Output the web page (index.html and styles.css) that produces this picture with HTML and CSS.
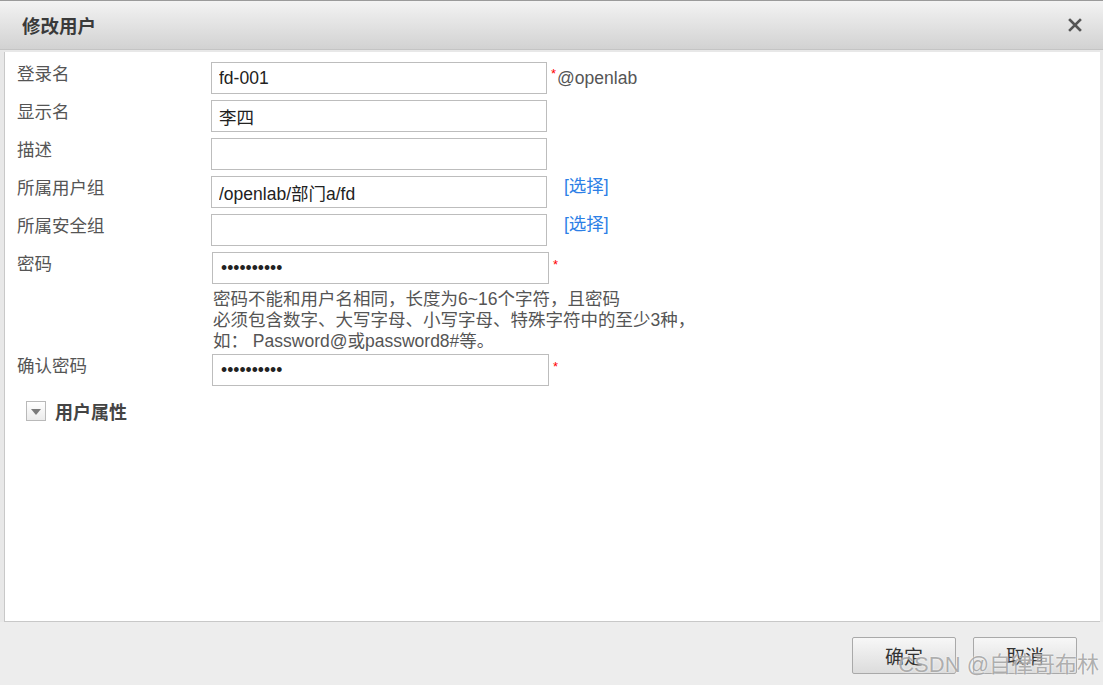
FILE: index.html
```html
<!DOCTYPE html>
<html>
<head>
    <meta charset="utf-8">
    <title>修改用户</title>
    <link rel="stylesheet" href="styles.css">
</head>
<body>
    <div class="dialog">
        <div class="dlg-head">
            <span class="dlg-title">修改用户</span>
            <svg class="dlg-close" width="14" height="14" viewBox="0 0 14 14">
                <path d="M2 2 L12 12 M12 2 L2 12" stroke="#555" stroke-width="2.6" stroke-linecap="square"/>
            </svg>
        </div>

        <div class="dlg-body">
            <div class="form-row">
                <label class="form-label">登录名</label>
                <input class="form-input" type="text" value="fd-001">
                <span class="req">*</span><span class="suffix">@openlab</span>
            </div>
            <div class="form-row">
                <label class="form-label">显示名</label>
                <input class="form-input" type="text" value="李四">
            </div>
            <div class="form-row">
                <label class="form-label">描述</label>
                <input class="form-input" type="text" value="">
            </div>
            <div class="form-row">
                <label class="form-label">所属用户组</label>
                <input class="form-input" type="text" value="/openlab/部门a/fd">
                <a class="pick">[选择]</a>
            </div>
            <div class="form-row">
                <label class="form-label">所属安全组</label>
                <input class="form-input" type="text" value="">
                <a class="pick">[选择]</a>
            </div>
            <div class="form-row row-pwd">
                <label class="form-label">密码</label>
                <input class="form-input input-pwd" type="password" value="abcdefghij">
                <span class="req req-pwd">*</span>
            </div>
            <div class="pwd-hint">
                密码不能和用户名相同，长度为6~16个字符，且密码<br>
                必须包含数字、大写字母、小写字母、特殊字符中的至少3种，<br>
                如： Password@或password8#等。
            </div>
            <div class="form-row">
                <label class="form-label">确认密码</label>
                <input class="form-input input-pwd" type="password" value="abcdefghij">
                <span class="req req-pwd">*</span>
            </div>

            <div class="section-toggle">
                <span class="toggle-box"><span class="toggle-arrow"></span></span>
                <span class="toggle-text">用户属性</span>
            </div>
        </div>

        <div class="dlg-foot">
            <button class="btn">确定</button>
            <button class="btn">取消</button>
        </div>

        <div class="watermark">CSDN @自律哥布林</div>
    </div>
</body>
</html>
```

FILE: styles.css
```css
body {
    margin: 0;
    font-family: "Liberation Sans", "Noto Sans CJK SC", sans-serif;
    background-color: #ffffff;
    overflow: hidden;
}

.dialog {
    position: relative;
    width: 1103px;
    height: 685px;
    display: flex;
    flex-direction: column;
    background-color: #e8e8e8;
    border-top: 1px solid #9a9a9a;
    box-sizing: border-box;
}

.dlg-head {
    height: 48px;
    display: flex;
    align-items: center;
    justify-content: space-between;
    padding: 0 22px 0 22px;
    background: linear-gradient(#f3f3f3, #d2d2d2);
    border-bottom: 1px solid #c4c4c4;
    flex-shrink: 0;
}

.dlg-title {
    font-size: 18.5px;
    font-weight: bold;
    color: #3a3a3a;
}

.dlg-close {
    margin-right: -1px;
}

.dlg-body {
    flex: 1;
    margin: 2px 3px 0 4px;
    padding: 10px 12px 0 12px;
    background-color: #ffffff;
    border-left: 1px solid #c8c8c8;
    border-bottom: 1px solid #c8c8c8;
}

.form-row {
    display: flex;
    align-items: flex-start;
    margin-bottom: 6px;
}

.form-label {
    width: 194px;
    flex-shrink: 0;
    font-size: 17.5px;
    line-height: 20px;
    padding-top: 2px;
    color: #555555;
}

.form-input {
    width: 336px;
    height: 32px;
    box-sizing: border-box;
    border: 1px solid #bdbdbd;
    padding: 0 7px;
    margin: 0;
    font-family: "Liberation Sans", "Noto Sans CJK SC", sans-serif;
    font-size: 17.5px;
    color: #222222;
    outline: none;
}

.input-pwd {
    width: 337px;
    margin-left: 1px;
    padding-left: 8px;
}

.req {
    color: #ff0000;
    font-size: 13px;
    line-height: 14px;
    margin: 5px 1px 0 4px;
}

.req-pwd {
    margin-top: 6px;
}

.suffix {
    font-size: 17.5px;
    line-height: 20px;
    padding-top: 6px;
    color: #555555;
}

.pick {
    margin-left: 17px;
    font-size: 17.5px;
    line-height: 20px;
    color: #2d7fe6;
    cursor: pointer;
}

.row-pwd {
    margin-bottom: 0;
}

.pwd-hint {
    margin: 5px 0 2px 196px;
    font-size: 17.5px;
    line-height: 21px;
    color: #555555;
}

.section-toggle {
    display: flex;
    align-items: center;
    margin: 12px 0 0 9px;
}

.toggle-box {
    width: 20px;
    height: 20px;
    box-sizing: border-box;
    border: 1px solid #b9b9b9;
    background: linear-gradient(#ffffff, #ebebeb);
    display: flex;
    align-items: center;
    justify-content: center;
}

.toggle-arrow {
    width: 0;
    height: 0;
    border-left: 5px solid transparent;
    border-right: 5px solid transparent;
    border-top: 6px solid #7a7a7a;
    margin-top: 1px;
}

.toggle-text {
    margin-left: 9px;
    font-size: 18px;
    font-weight: bold;
    color: #444444;
}

.dlg-foot {
    height: 63px;
    flex-shrink: 0;
    display: flex;
    justify-content: flex-end;
    align-items: flex-start;
    gap: 17px;
    padding: 15px 26px 0 0;
    box-sizing: border-box;
    background-color: #ededed;
}

.btn {
    width: 104px;
    height: 37px;
    border: 1px solid #a9a9a9;
    border-radius: 2px;
    background: linear-gradient(#f7f7f7, #dcdcdc);
    font-family: "Noto Sans CJK SC", sans-serif;
    font-size: 19px;
    color: #333333;
    padding: 0;
    cursor: pointer;
}

.watermark {
    position: absolute;
    right: 4px;
    bottom: 7px;
    font-family: "Liberation Sans", "Noto Sans CJK SC", sans-serif;
    font-size: 22px;
    color: rgba(150, 150, 150, 0.75);
    text-shadow: 0 0 2px #ffffff;
    pointer-events: none;
}
```
